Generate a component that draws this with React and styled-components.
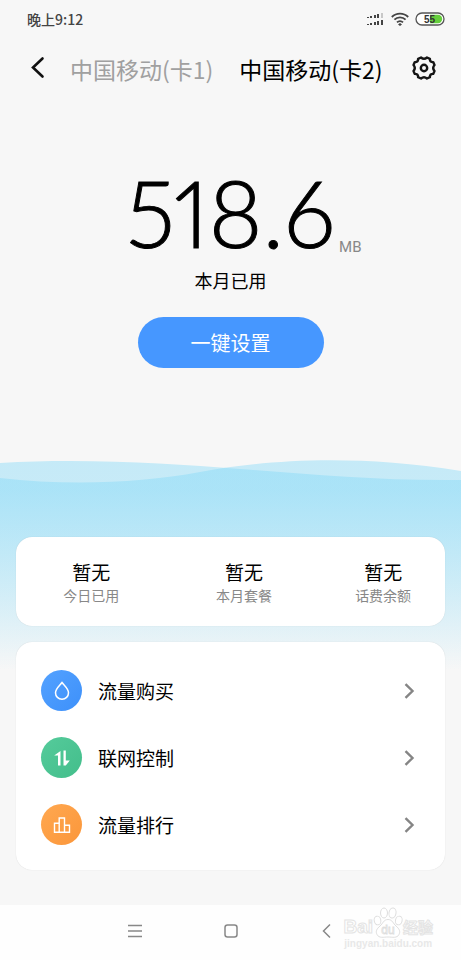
import React from "react";
import styled, { createGlobalStyle } from "styled-components";

const GlobalStyle = createGlobalStyle`
  *, *::before, *::after { box-sizing: border-box; }
  body {
    margin: 0;
    background: #f7f7f7;
    color: #000;
    font-family: "Noto Sans CJK SC", sans-serif;
  }
  button { font: inherit; color: inherit; border: 0; padding: 0; background: none; cursor: pointer; }
`;

const Screen = styled.div`
  display: flex;
  flex-direction: column;
  min-height: 100vh;
`;

const StatusBar = styled.div`
  display: flex;
  align-items: center;
  justify-content: space-between;
  height: 38px;
  padding: 0 16px 0 27px;
  font-size: 14px;
  font-weight: 500;
  color: #444;
`;

const StatusIcons = styled.div`
  display: flex;
  align-items: center;
  gap: 6px;
`;

const Header = styled.header`
  display: flex;
  align-items: center;
  height: 60px;
  padding: 0 24px 0 26px;
`;

const IconButton = styled.button`
  display: flex;
  align-items: center;
  justify-content: center;
  width: ${(p) => p.$size}px;
  height: ${(p) => p.$size}px;
`;

const Tabs = styled.div`
  display: flex;
  flex: 1;
  gap: 26px;
  padding: 2px 0 0 20px;
`;

const Tab = styled.button`
  font-size: 23px;
  line-height: 34px;
  white-space: nowrap;
  && { color: ${(p) => (p.$active ? "#000" : "#a0a0a0")}; }
`;

const Hero = styled.section`
  display: flex;
  flex-direction: column;
  align-items: center;
  padding: 62px 16px 90px;
`;

const Usage = styled.div`
  display: grid;
  grid-template-columns: 1fr auto 1fr;
  column-gap: 4px;
  width: 100%;
`;

const Amount = styled.span`
  grid-column: 2;
  font-family: Lato, sans-serif;
  font-size: 92px;
  font-weight: 300;
  line-height: 106px;
  font-feature-settings: "pnum";
  -webkit-text-stroke: 1px #000;
`;

const Unit = styled.span`
  align-self: end;
  padding-bottom: 9px;
  font-family: Roboto, sans-serif;
  font-size: 15px;
  line-height: 20px;
  color: #888;
`;

const Caption = styled.div`
  font-size: 18px;
  line-height: 28px;
`;

const SetupButton = styled.button`
  width: 186px;
  height: 51px;
  margin-top: 23px;
  border-radius: 26px;
  font-size: 20px;
  && { background: #4697ff; color: #fff; }
`;

const Water = styled.section`
  position: relative;
  display: flex;
  flex-direction: column;
  gap: 16px;
  padding: 79px 16px 35px;
`;

const Waves = styled.svg`
  position: absolute;
  top: 0;
  left: 0;
  width: 100%;
  height: 212px;
`;

const Card = styled.div`
  position: relative;
  border-radius: 16px;
  background: #fff;
  box-shadow: 0 0 1px rgba(0, 0, 0, 0.16);
`;

const Stats = styled(Card)`
  display: grid;
  grid-template-columns: 151fr 155fr 124fr;
  padding: 22px 0 20px;
`;

const Stat = styled.div`
  display: flex;
  flex-direction: column;
  align-items: center;
`;

const StatValue = styled.span`
  font-size: 19px;
  line-height: 26px;
`;

const StatLabel = styled.span`
  font-size: 14px;
  line-height: 21px;
  color: #888;
`;

const Menu = styled(Card)`
  padding: 15px 0 12px;
`;

const MenuRow = styled.button`
  display: flex;
  align-items: center;
  gap: 16px;
  width: 100%;
  height: 67px;
  && { padding: 0 30px 0 25px; }
`;

const Badge = styled.span`
  display: flex;
  align-items: center;
  justify-content: center;
  width: 41px;
  height: 41px;
  border-radius: 50%;
  background: linear-gradient(135deg, ${(p) => p.$from}, ${(p) => p.$to});
`;

const MenuLabel = styled.span`
  flex: 1;
  font-size: 19px;
  line-height: 28px;
  text-align: left;
`;

const NavBar = styled.nav`
  position: relative;
  display: flex;
  flex: 1;
  align-items: center;
  justify-content: center;
  gap: 72px;
  min-height: 55px;
  padding-bottom: 3px;
  background: #fefefe;
`;

const Watermark = styled.div`
  position: absolute;
  top: 1px;
  right: 28px;
  display: flex;
  flex-direction: column;
  align-items: center;
  font-family: "Liberation Sans", sans-serif;
  font-weight: 700;
  color: #fff;
  -webkit-text-stroke: 1px #e4e4e4;
`;

const Brand = styled.div`
  display: flex;
  align-items: flex-end;
  height: 32px;
  font-size: 19px;
  line-height: 22px;
`;

const BrandCn = styled.span`
  font-family: "Noto Sans CJK SC", sans-serif;
  font-size: 15px;
  line-height: 22px;
`;

const Site = styled.span`
  font-size: 10px;
  line-height: 12px;
  color: #e8e8e8;
  -webkit-text-stroke: 0;
`;

const Signal = () => (
  <svg width="19" height="14" viewBox="0 0 19 14" fill="#444" aria-hidden="true">
    <path d="M1 5h2v1H1zM4 4h2v2H4zM8 3h2v3H8zM11 2h2v4h-2z" />
    <path d="M15 1h2v5h-2z" fill="#c8c8c8" />
    <path d="M1 12h2v1H1zM4 11h2v2H4zM8 10h2v3H8zM11 9h2v4h-2zM15 8h2v5h-2z" />
  </svg>
);

const Wifi = () => (
  <svg width="18" height="14" viewBox="0 0 18 14" fill="none" stroke="#444" strokeWidth="1.8" aria-hidden="true">
    <path d="M.8 5a11.6 11.6 0 0 1 16.4 0M3.4 7.7a7.9 7.9 0 0 1 11.2 0M6 10.3a4.2 4.2 0 0 1 6 0" />
    <path d="M9 11.1 11 12.4 9 14 7 12.4z" fill="#444" stroke="none" />
  </svg>
);

const Battery = () => (
  <svg width="30" height="14" viewBox="0 0 30 14" role="img" aria-label="55">
    <rect x="1" y="1" width="28" height="12" rx="6" fill="#fff" stroke="#555" strokeWidth="1.3" />
    <path d="M15 2.8h8a4.2 4.2 0 0 1 0 8.4h-8z" fill="#66cf3c" />
    <text x="14.5" y="10.5" textAnchor="middle" fontFamily="Liberation Sans, sans-serif" fontSize="10" fontWeight="700" fill="#333">55</text>
  </svg>
);

const Back = () => (
  <svg width="24" height="24" viewBox="0 0 24 24" fill="none" stroke="#111" strokeWidth="2.6" strokeLinecap="round" aria-hidden="true">
    <path d="M16.5 2.5 7 11.500l9.500 9" />
  </svg>
);

const Gear = () => (
  <svg width="26" height="26" viewBox="0 0 26 26" fill="none" stroke="#151515" strokeWidth="2.4" strokeLinejoin="round" aria-hidden="true">
    <path d="M10 2.500Q13 5.100 16 2.500L18.900 3.800Q18.700 7.300 22.200 7.100L23.500 10Q20.900 13 23.500 16L22.200 18.900Q18.700 18.700 18.900 22.200L16 23.500Q13 20.900 10 23.500L7.100 22.200Q7.300 18.700 3.800 18.900L2.500 16Q5.100 13 2.500 10L3.800 7.100Q7.300 7.300 7.100 3.800Z" />
    <circle cx="13" cy="13" r="3.200" />
  </svg>
);

const Chevron = () => (
  <svg width="11" height="16" viewBox="0 0 11 16" fill="none" stroke="#858585" strokeWidth="2.400" aria-hidden="true">
    <path d="M1.500 1.200 8.500 8l-7 6.800" />
  </svg>
);

const Drop = () => (
  <svg width="18" height="20" viewBox="0 0 18 20" fill="none" stroke="#fff" strokeWidth="1.500" aria-hidden="true">
    <path d="M9 1.500C7.200 4 2.500 7.600 2.500 11.800a6.500 6.500 0 0 0 13 0C15.500 7.600 10.800 4 9 1.500z" />
  </svg>
);

const UpDown = () => (
  <svg width="18" height="18" viewBox="0 0 18 18" fill="#fff" aria-hidden="true">
    <path d="M7.500 2v14.500H5V6.500H1.200z" />
    <path d="M10.500 1.500H12.800V11.500H16.800L12.800 16.500H10.500z" />
  </svg>
);

const Bars = () => (
  <svg width="18" height="18" viewBox="0 0 18 18" fill="none" stroke="#fff" strokeWidth="1.400" aria-hidden="true">
    <path d="M1.500 16.200V7.200H6.200V2H11.500V16.200M6.200 7.200V16.200M11.500 9.200H16.500V16.200M.8 16.200H17.200" />
  </svg>
);

const Paw = () => (
  <svg width="30" height="31" viewBox="0 0 30 31" fill="#fff" stroke="#dedede" strokeWidth="1" aria-hidden="true">
    <ellipse cx="4.500" cy="13.500" rx="3.300" ry="4.400" transform="rotate(-12 4.500 13.500)" />
    <ellipse cx="11" cy="6" rx="3.500" ry="5" />
    <ellipse cx="19.500" cy="6" rx="3.500" ry="5" transform="rotate(10 19.500 6)" />
    <ellipse cx="25.800" cy="13.500" rx="3.300" ry="4.400" transform="rotate(15 25.800 13.500)" />
    <path d="M15 12.500c4.500 0 5 4 8 6.500 3.500 3 4.500 5.500 3 8.500-2 4-6.500 2.500-11 2.500s-9 1.500-11-2.500c-1.500-3-.5-5.500 3-8.500 3-2.500 3.500-6.500 8-6.500z" />
    <text x="15" y="27" textAnchor="middle" fontSize="12" fontWeight="400" strokeWidth=".8">du</text>
  </svg>
);

const stats = [
  ["暂无", "今日已用"],
  ["暂无", "本月套餐"],
  ["暂无", "话费余额"],
];

const menu = [
  { label: "流量购买", from: "#54a2ff", to: "#3d90fa", Icon: Drop },
  { label: "联网控制", from: "#55cb9b", to: "#43be8b", Icon: UpDown },
  { label: "流量排行", from: "#ffa850", to: "#fb963a", Icon: Bars },
];

export default function App() {
  return (
    <>
      <GlobalStyle />
      <Screen>
        <StatusBar>
          <span>晚上9:12</span>
          <StatusIcons>
            <Signal />
            <Wifi />
            <Battery />
          </StatusIcons>
        </StatusBar>

        <Header>
          <IconButton $size={24} aria-label="返回"><Back /></IconButton>
          <Tabs>
            <Tab>中国移动(卡1)</Tab>
            <Tab $active>中国移动(卡2)</Tab>
          </Tabs>
          <IconButton $size={26} aria-label="设置"><Gear /></IconButton>
        </Header>

        <Hero>
          <Usage>
            <Amount>518.6</Amount>
            <Unit>MB</Unit>
          </Usage>
          <Caption>本月已用</Caption>
          <SetupButton>一键设置</SetupButton>
        </Hero>

        <Water>
          <Waves viewBox="0 0 461 212" preserveAspectRatio="none" aria-hidden="true">
            <defs>
              <linearGradient id="water" gradientUnits="userSpaceOnUse" x1="0" y1="0" x2="0" y2="212">
                <stop offset="0" stopColor="#80d8f8" stopOpacity=".42" />
                <stop offset=".15" stopColor="#80d8f8" stopOpacity=".4" />
                <stop offset="1" stopColor="#80d8f8" stopOpacity="0" />
              </linearGradient>
            </defs>
            <path fill="url(#water)" d="M0 5C90 0 170 6 240 11S380 23 461 22V212H0z" />
            <path fill="url(#water)" d="M0 20C70 28 140 25 200 14S350-5 461 13V212H0z" />
          </Waves>
          <Stats>
            {stats.map(([value, label]) => (
              <Stat key={label}>
                <StatValue>{value}</StatValue>
                <StatLabel>{label}</StatLabel>
              </Stat>
            ))}
          </Stats>
          <Menu>
            {menu.map(({ label, from, to, Icon }) => (
              <MenuRow key={label}>
                <Badge $from={from} $to={to}><Icon /></Badge>
                <MenuLabel>{label}</MenuLabel>
                <Chevron />
              </MenuRow>
            ))}
          </Menu>
        </Water>

        <NavBar>
          <IconButton $size={24} aria-label="最近任务">
            <svg width="14" height="14" viewBox="0 0 14 14" stroke="#888" strokeWidth="1.300" aria-hidden="true">
              <path d="M0 1.500h14M0 7h14M0 12.500h14" />
            </svg>
          </IconButton>
          <IconButton $size={24} aria-label="主屏幕">
            <svg width="14" height="14" viewBox="0 0 14 14" fill="none" stroke="#888" strokeWidth="1.500" aria-hidden="true">
              <rect x="1" y="1" width="12" height="12" rx="2.500" />
            </svg>
          </IconButton>
          <IconButton $size={24} aria-label="后退">
            <svg width="9" height="16" viewBox="0 0 9 16" fill="none" stroke="#888" strokeWidth="1.500" aria-hidden="true">
              <path d="M8 1.500 1.500 8 8 14.500" />
            </svg>
          </IconButton>
          <Watermark>
            <Brand>
              <span>Bai</span>
              <Paw />
              <BrandCn>经验</BrandCn>
            </Brand>
            <Site>jingyan.baidu.com</Site>
          </Watermark>
        </NavBar>
      </Screen>
    </>
  );
}
